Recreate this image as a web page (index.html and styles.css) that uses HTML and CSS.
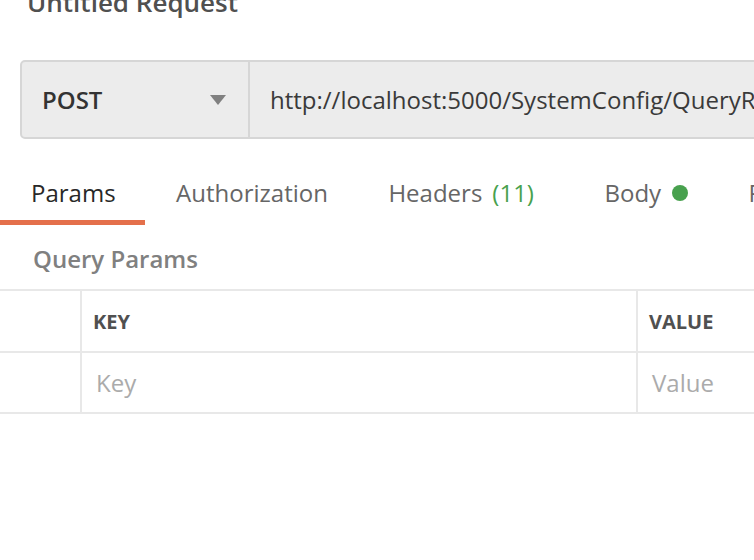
FILE: index.html
```html
<!DOCTYPE html>
<html>
<head>
<meta charset="utf-8">
<link rel="stylesheet" href="styles.css">
</head>
<body>
<div class="page">
  <h1 class="title">Untitled Request</h1>
  <div class="request-bar">
    <div class="method">
      <span class="method-name">POST</span>
      <svg class="caret" width="16" height="10" viewBox="0 0 16 10"><path d="M0 0 H16 L8 10 Z" fill="#808080"/></svg>
    </div>
    <div class="url">http://localhost:5000/SystemConfig/QueryRoleList</div>
  </div>
  <div class="tabs">
    <div class="tab active">Params</div>
    <div class="tab">Authorization</div>
    <div class="tab">Headers<span class="count">(11)</span></div>
    <div class="tab">Body<span class="dot"></span></div>
    <div class="tab">Pre-request Script</div>
  </div>
  <div class="section-title">Query Params</div>
  <div class="table">
    <div class="row head">
      <div class="cell check"></div>
      <div class="cell key">KEY</div>
      <div class="cell value">VALUE</div>
    </div>
    <div class="row body-row">
      <div class="cell check"></div>
      <div class="cell key placeholder">Key</div>
      <div class="cell value placeholder">Value</div>
    </div>
  </div>
</div>
</body>
</html>
```
FILE: styles.css
```css
html, body {
  margin: 0;
  padding: 0;
  background: #ffffff;
  overflow: hidden;
  width: 754px;
  height: 560px;
}
body {
  font-family: "Open Sans", "Noto Sans", sans-serif;
  color: #505050;
}
.page {
  width: 754px;
  overflow: hidden;
}
.title {
  margin: -13px 0 0 27px;
  font-size: 26px;
  line-height: 30px;
  font-weight: 600;
  color: #505050;
  white-space: nowrap;
}
.request-bar {
  margin: 43px 0 0 20px;
  width: 1000px;
  height: 75px;
  display: flex;
  background: #ececec;
  border: 2px solid #d6d6d6;
  border-radius: 5px;
}
.method {
  width: 228px;
  flex: none;
  display: flex;
  align-items: center;
  justify-content: space-between;
  padding: 0 22px 0 20px;
  box-sizing: border-box;
  border-right: 2px solid #d6d6d6;
}
.method-name {
  font-size: 24px;
  font-weight: 600;
  color: #333333;
}
.caret {
  display: block;
}
.url {
  display: flex;
  align-items: center;
  padding-left: 20px;
  font-size: 24px;
  color: #3a3a3a;
  white-space: nowrap;
}
.tabs {
  display: flex;
  margin-top: 26px;
  white-space: nowrap;
}
.tab {
  padding: 0 29.5px 0 31px;
  height: 55px;
  font-size: 24px;
  color: #666666;
  border-bottom: 5px solid transparent;
  display: flex;
  align-items: center;
  flex: none;
}
.tab.active {
  color: #282828;
  border-bottom-color: #e4704b;
}
.count {
  color: #48a14e;
  margin-left: 10px;
  margin-right: 10px;
}
.dot {
  display: inline-block;
  width: 16px;
  height: 16px;
  border-radius: 50%;
  background: #48a14e;
  margin-left: 11px;
}
.section-title {
  margin: 14px 0 0 33px;
  font-size: 24px;
  font-weight: 600;
  color: #808080;
  line-height: 40px;
  height: 40px;
  white-space: nowrap;
}
.table {
  margin-top: 10px;
  border-top: 2px solid #e8e8e8;
}
.row {
  display: flex;
  height: 60px;
  border-bottom: 2px solid #e8e8e8;
}
.row.body-row {
  height: 59px;
}
.cell {
  display: flex;
  align-items: center;
  box-sizing: border-box;
  flex: none;
  white-space: nowrap;
}
.check {
  width: 82px;
  border-right: 2px solid #e8e8e8;
}
.key {
  width: 556px;
  border-right: 2px solid #e8e8e8;
  padding-left: 11px;
}
.value {
  width: 200px;
  padding-left: 11px;
}
.head .cell {
  font-size: 20px;
  font-weight: 700;
  color: #505050;
}
.placeholder {
  font-size: 24px;
  color: #ababab;
  padding-left: 14px;
}
```
